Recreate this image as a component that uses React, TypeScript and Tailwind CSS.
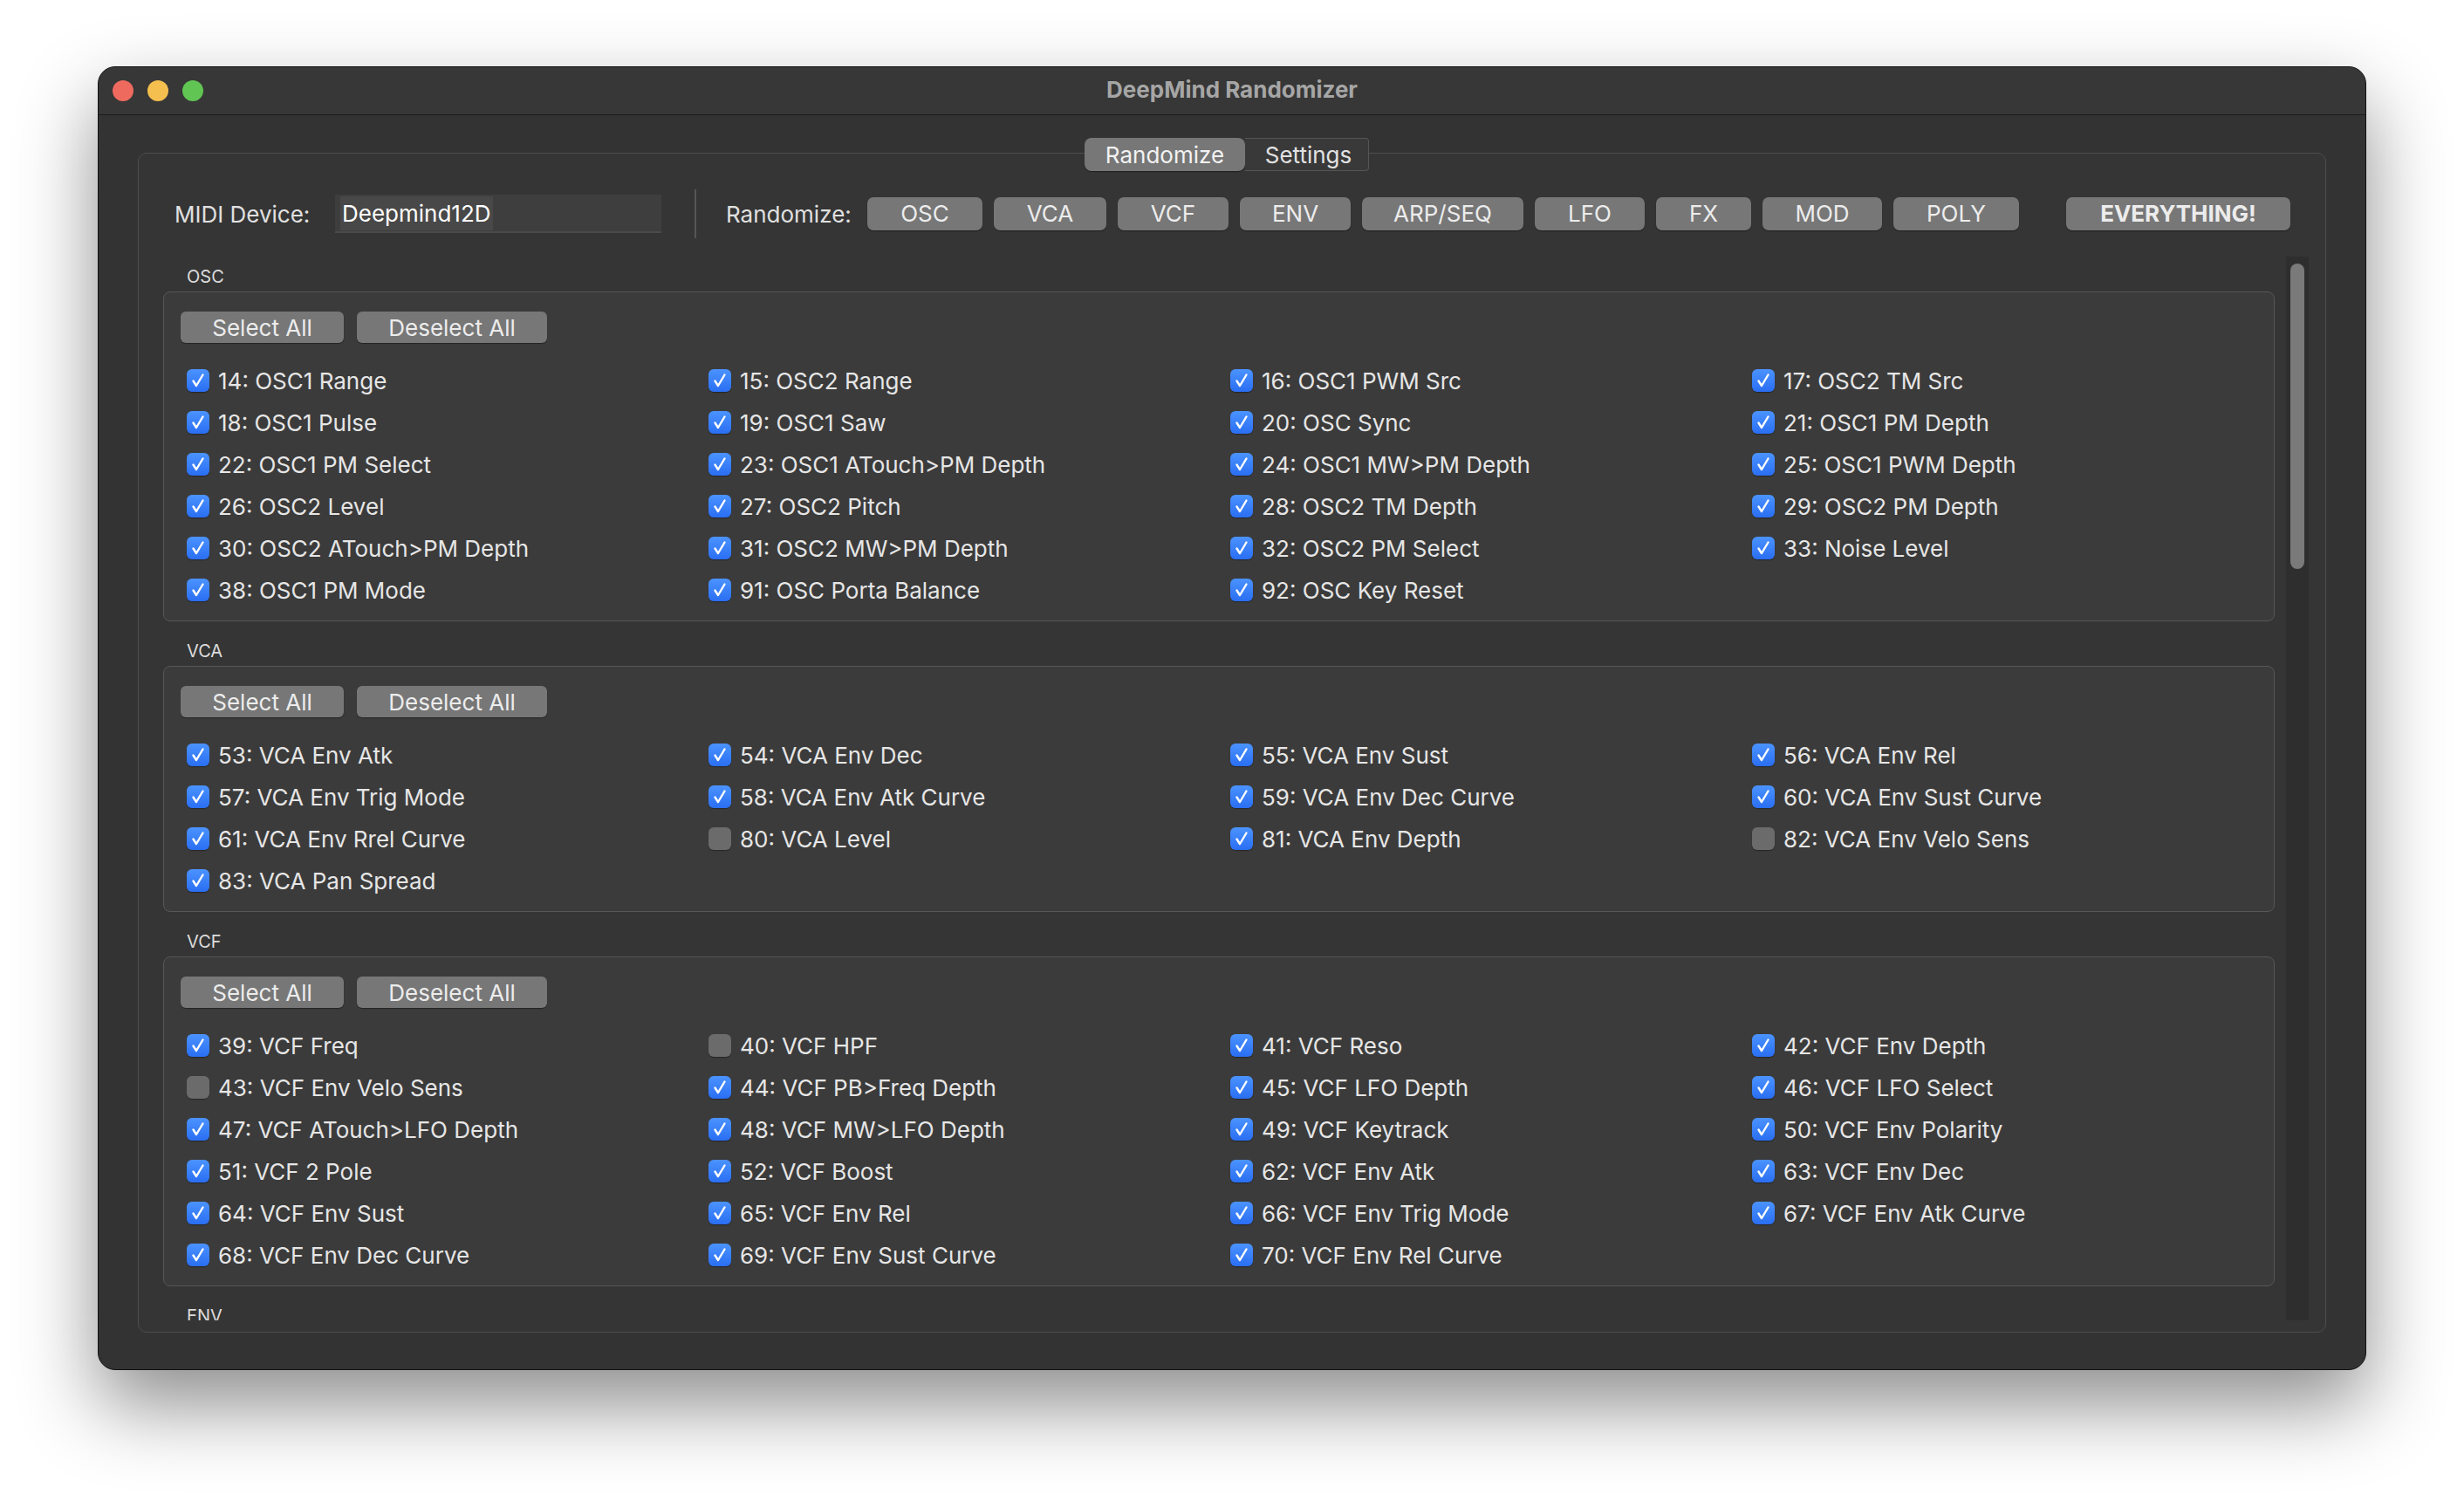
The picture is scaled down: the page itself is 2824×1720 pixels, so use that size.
import React from "react";

type Item = [number, string, boolean];

const sections: { name: string; items: Item[] }[] = [
  {
    name: "OSC",
    items: [
      [14, "OSC1 Range", true],
      [15, "OSC2 Range", true],
      [16, "OSC1 PWM Src", true],
      [17, "OSC2 TM Src", true],
      [18, "OSC1 Pulse", true],
      [19, "OSC1 Saw", true],
      [20, "OSC Sync", true],
      [21, "OSC1 PM Depth", true],
      [22, "OSC1 PM Select", true],
      [23, "OSC1 ATouch>PM Depth", true],
      [24, "OSC1 MW>PM Depth", true],
      [25, "OSC1 PWM Depth", true],
      [26, "OSC2 Level", true],
      [27, "OSC2 Pitch", true],
      [28, "OSC2 TM Depth", true],
      [29, "OSC2 PM Depth", true],
      [30, "OSC2 ATouch>PM Depth", true],
      [31, "OSC2 MW>PM Depth", true],
      [32, "OSC2 PM Select", true],
      [33, "Noise Level", true],
      [38, "OSC1 PM Mode", true],
      [91, "OSC Porta Balance", true],
      [92, "OSC Key Reset", true],
    ],
  },
  {
    name: "VCA",
    items: [
      [53, "VCA Env Atk", true],
      [54, "VCA Env Dec", true],
      [55, "VCA Env Sust", true],
      [56, "VCA Env Rel", true],
      [57, "VCA Env Trig Mode", true],
      [58, "VCA Env Atk Curve", true],
      [59, "VCA Env Dec Curve", true],
      [60, "VCA Env Sust Curve", true],
      [61, "VCA Env Rrel Curve", true],
      [80, "VCA Level", false],
      [81, "VCA Env Depth", true],
      [82, "VCA Env Velo Sens", false],
      [83, "VCA Pan Spread", true],
    ],
  },
  {
    name: "VCF",
    items: [
      [39, "VCF Freq", true],
      [40, "VCF HPF", false],
      [41, "VCF Reso", true],
      [42, "VCF Env Depth", true],
      [43, "VCF Env Velo Sens", false],
      [44, "VCF PB>Freq Depth", true],
      [45, "VCF LFO Depth", true],
      [46, "VCF LFO Select", true],
      [47, "VCF ATouch>LFO Depth", true],
      [48, "VCF MW>LFO Depth", true],
      [49, "VCF Keytrack", true],
      [50, "VCF Env Polarity", true],
      [51, "VCF 2 Pole", true],
      [52, "VCF Boost", true],
      [62, "VCF Env Atk", true],
      [63, "VCF Env Dec", true],
      [64, "VCF Env Sust", true],
      [65, "VCF Env Rel", true],
      [66, "VCF Env Trig Mode", true],
      [67, "VCF Env Atk Curve", true],
      [68, "VCF Env Dec Curve", true],
      [69, "VCF Env Sust Curve", true],
      [70, "VCF Env Rel Curve", true],
    ],
  },
  {
    name: "ENV",
    items: [
      [71, "Mod Env Atk", true],
      [72, "Mod Env Dec", true],
      [73, "Mod Env Sust", true],
      [74, "Mod Env Rel", true],
    ],
  },
];

const randomizeButtons = [
  { label: "OSC", w: "w-[132px]" },
  { label: "VCA", w: "w-[129px]" },
  { label: "VCF", w: "w-[127px]" },
  { label: "ENV", w: "w-[127px]" },
  { label: "ARP/SEQ", w: "w-[185px]" },
  { label: "LFO", w: "w-[126px]" },
  { label: "FX", w: "w-[109px]" },
  { label: "MOD", w: "w-[137px]" },
  { label: "POLY", w: "w-[144px]" },
];

function Checkbox({ checked }: { checked: boolean }) {
  if (!checked) {
    return (
      <div className="w-[26px] h-[26px] rounded-[6px] bg-[#6b6b6b] shadow-[0_1px_1px_rgba(0,0,0,0.35)] shrink-0" />
    );
  }
  return (
    <div className="w-[26px] h-[26px] rounded-[6px] bg-gradient-to-b from-[#4b93ff] to-[#2a6ef2] shadow-[0_1px_1px_rgba(0,0,0,0.35)] shrink-0 flex items-center justify-center">
      <svg width="26" height="26" viewBox="0 0 26 26">
        <path
          d="M7.5 13.5 L11 19 L18.5 6.5"
          fill="none"
          stroke="white"
          strokeWidth="2.4"
          strokeLinecap="round"
          strokeLinejoin="round"
        />
      </svg>
    </div>
  );
}

function GrayButton({ children, className = "" }: { children: React.ReactNode; className?: string }) {
  return (
    <button
      type="button"
      className={`h-[38px] rounded-[7px] bg-[#777777] text-[#ececec] text-[26px] leading-none flex items-center justify-center shadow-[0_1px_1px_rgba(0,0,0,0.4)] ${className}`}
    >
      {children}
    </button>
  );
}

export default function App() {
  return (
    <div
      className="w-[2824px] h-[1720px] bg-white pt-[76px] pl-[112px]"
      style={{ fontFamily: "Inter, 'Noto Sans', sans-serif" }}
    >
      {/* Window */}
      <div className="w-[2600px] h-[1494px] rounded-[20px] bg-[#333333] border border-[#111] shadow-[0_40px_90px_rgba(0,0,0,0.45)] overflow-hidden flex flex-col">
        {/* Title bar */}
        <div className="h-[55px] bg-[#373737] border-b border-[#1b1b1b] relative flex items-center justify-center pb-[3px] shrink-0">
          <div className="absolute left-[16px] top-[15px] flex gap-[16px]">
            <div className="w-[24px] h-[24px] rounded-full bg-[#ee6a5f]" />
            <div className="w-[24px] h-[24px] rounded-full bg-[#f5bf4f]" />
            <div className="w-[24px] h-[24px] rounded-full bg-[#61c554]" />
          </div>
          <span className="text-[26px] font-bold text-[#a6a6a6]">DeepMind Randomizer</span>
        </div>

        {/* Content */}
        <div className="flex flex-col items-center pt-[26px]">
          {/* Tabs */}
          <div className="flex relative z-10 -mb-[21px] mr-[12px]">
            <div className="w-[184px] h-[38px] rounded-[8px] bg-[#777777] text-[#f2f2f2] text-[26px] flex items-center justify-center shadow-[0_1px_1px_rgba(0,0,0,0.4)]">
              Randomize
            </div>
            <div className="w-[142px] h-[38px] rounded-r-[4px] bg-[#393939] border border-[#555] border-l-0 text-[#e2e2e2] text-[26px] flex items-center justify-center pl-[4px]">
              Settings
            </div>
          </div>

          {/* Panel */}
          <div className="w-[2508px] h-[1352px] rounded-[10px] border border-[#4e4e4e] bg-[#353535] flex flex-col">
            {/* MIDI row */}
            <div className="mt-[47px] h-[44px] pl-[41px] flex items-center">
              <span className="w-[184px] text-[26px] text-[#e0e0e0]">MIDI Device:</span>
              <div className="w-[374px] h-[44px] bg-[#3e3e3e] border-b-2 border-[#4a4a4a] flex items-center pl-[6px]">
                <span className="bg-[#484848] text-[26px] text-white px-[2px]">Deepmind12D</span>
              </div>
              <div className="ml-[38px] w-[2px] h-[56px] bg-[#555]" />
              <span className="ml-[34px] w-[162px] text-[26px] text-[#e0e0e0]">Randomize:</span>
              <div className="flex gap-[13px]">
                {randomizeButtons.map((b) => (
                  <GrayButton key={b.label} className={b.w}>
                    {b.label}
                  </GrayButton>
                ))}
              </div>
              <GrayButton className="ml-[54px] w-[257px] font-bold">EVERYTHING!</GrayButton>
            </div>

            {/* Scroll area */}
            <div className="mt-[27px] h-[1219px] flex pl-[28px] pr-[19px] gap-[13px]">
              <div className="flex-1 overflow-hidden pt-[11px]">
                {sections.map((s) => (
                  <div key={s.name} className="mb-[22px]">
                    <div className="pl-[27px] h-[24px] leading-[24px] text-[20px] text-[#dcdcdc] mb-[5px]">
                      {s.name}
                    </div>
                    <div className="rounded-[8px] border border-[#575757] bg-[#3b3b3b] pt-[22px] pb-[11px]">
                      <div className="pl-[19px] flex gap-[15px]">
                        <button
                          type="button"
                          className="w-[187px] h-[36px] rounded-[6px] bg-[#777777] text-[#ececec] text-[26px] flex items-center justify-center shadow-[0_1px_1px_rgba(0,0,0,0.4)]"
                        >
                          Select All
                        </button>
                        <button
                          type="button"
                          className="w-[218px] h-[36px] rounded-[6px] bg-[#777777] text-[#ececec] text-[26px] flex items-center justify-center shadow-[0_1px_1px_rgba(0,0,0,0.4)]"
                        >
                          Deselect All
                        </button>
                      </div>
                      <div className="mt-[19px] pl-[26px] grid grid-cols-4">
                        {s.items.map(([num, label, checked]) => (
                          <div key={num} className="h-[48px] flex items-center">
                            <Checkbox checked={checked} />
                            <span className="ml-[10px] text-[26px] text-[#e6e6e6] whitespace-nowrap">
                              {num}: {label}
                            </span>
                          </div>
                        ))}
                      </div>
                    </div>
                  </div>
                ))}
              </div>
              <div className="w-[26px] bg-[#2e2e2e] pt-[8px] px-[5px]">
                <div className="h-[350px] rounded-full bg-[#7a7a7a]" />
              </div>
            </div>
          </div>
        </div>
      </div>
    </div>
  );
}
